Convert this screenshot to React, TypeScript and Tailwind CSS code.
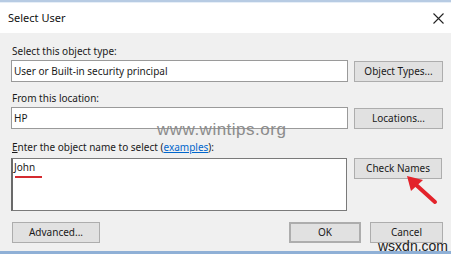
export default function App() {
  const font = { fontFamily: '"Noto Sans", "Segoe UI", sans-serif' };
  const btn =
    "h-[21px] flex items-center justify-center bg-[#e1e1e1] border border-[#adadad] text-[10px] text-[#1a1a1a]";

  return (
    <div className="relative w-[451px] h-[254px] overflow-hidden bg-white flex flex-col" style={font}>
      {/* window edge */}
      <div className="h-[2px] bg-[#b7cbe3]" />
      <div className="h-[1px] bg-[#e6eef7]" />

      {/* title bar */}
      <div className="h-[30px] flex items-center justify-between pl-[8px] pr-[6px] bg-white">
        <span className="text-[11px] text-[#111]">Select User</span>
        <svg width="11" height="11" viewBox="0 0 11 11" className="mr-[1px]">
          <path d="M0.5 0.5L10.5 10.5M10.5 0.5L0.5 10.5" stroke="#222" strokeWidth="1.1" />
        </svg>
      </div>

      {/* body */}
      <div className="flex-1 bg-[#f0f0f0] pl-[11px] pr-[8px] pt-[11px] flex flex-col">
        <div className="h-[14px] leading-[14px] text-[10px] text-[#1a1a1a] pl-[1px]">Select this object type:</div>
        <div className="mt-[2px] flex items-end gap-[6px]">
          <div className="w-[337px] h-[22px] bg-white border border-[#9a9a9a] flex items-center px-[2px] text-[10px] text-[#1a1a1a]">
            User or Built-in security principal
          </div>
          <div className={`${btn} w-[89px] h-[20px]`}>Object Types...</div>
        </div>

        <div className="mt-[9px] h-[14px] leading-[14px] text-[10px] text-[#1a1a1a] pl-[1px]">From this location:</div>
        <div className="mt-[2px] flex items-end gap-[6px]">
          <div className="w-[337px] h-[22px] bg-white border border-[#9a9a9a] flex items-center px-[2px] text-[10px] text-[#1a1a1a]">
            HP
          </div>
          <div className={`${btn} w-[89px]`}>Locations...</div>
        </div>

        <div className="mt-[11px] h-[14px] leading-[14px] text-[10px] text-[#1a1a1a] pl-[1px]">
          <span className="underline">E</span>nter the object name to select (
          <span className="text-[#0066cc] underline">examples</span>):
        </div>
        <div className="mt-[4px] flex items-start gap-[7px]">
          <div className="relative w-[336px] h-[53px] bg-white border border-[#7a7a7a] border-l-2 border-l-[#6a6a6a] px-[1px] pt-[1px] text-[10px] leading-[14px] text-[#1a1a1a]">
            John
            <div className="absolute left-[2px] top-[17px] w-[27px] h-[2px] bg-[#d42a2f]" />
          </div>
          <div className={`${btn} w-[88px] h-[21px]`}>Check Names</div>
        </div>

        <div className="mt-[11px] flex items-center">
          <div className={`${btn} w-[88px] ml-[1px]`}>Advanced...</div>
          <div className={`${btn} w-[72px] ml-auto border-2 border-[#0078d7]`}>OK</div>
          <div className={`${btn} w-[73px] ml-[9px]`}>Cancel</div>
        </div>
      </div>

      {/* bottom edge */}
      <div className="h-[3px] bg-[#8fb0d6]" />

      {/* watermark */}
      <div
        className="absolute left-[157px] top-[121px] text-[17px] leading-[18px] text-[#8c8c8c] tracking-[0.5px]"
        style={{ fontFamily: '"Liberation Sans", sans-serif' }}
      >
        www.wintips.org
      </div>
      <div
        className="absolute left-[377px] top-[239px] text-[14px] leading-[14px] text-[#222] px-[1px]"
        style={{ fontFamily: '"Liberation Sans", sans-serif' }}
      >
        wsxdn.com
      </div>

      {/* red arrow */}
      <svg className="absolute left-[400px] top-[170px]" width="40" height="36" viewBox="0 0 40 36">
        <path d="M35 32L14 13" stroke="#e3232b" strokeWidth="4" strokeLinecap="round" />
        <path d="M7 6L23 10L11 21Z" fill="#e3232b" />
      </svg>
    </div>
  );
}
